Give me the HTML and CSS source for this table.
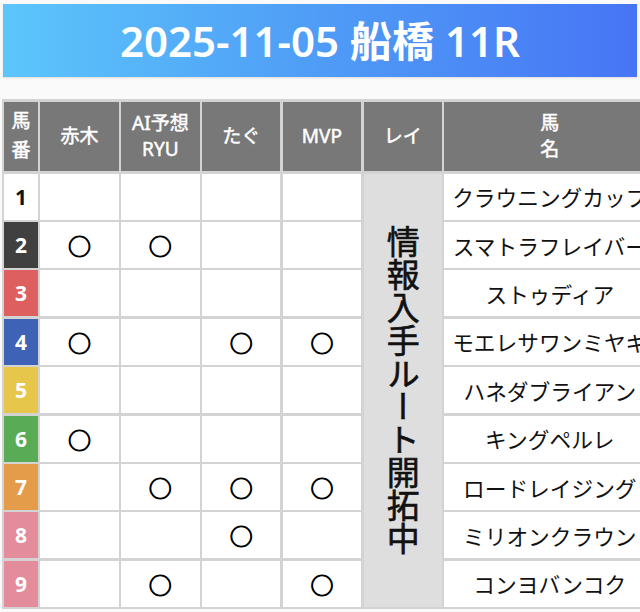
FILE: index.html
```html
<!DOCTYPE html>
<html lang="ja">
<head>
<meta charset="utf-8">
<title>2025-11-05 船橋 11R</title>
<link rel="stylesheet" href="styles.css">
</head>
<body>
<header class="banner"><h1 class="title">2025-11-05 船橋 11R</h1></header>
<div class="grid">
  <div class="hd hd-num"><span>馬</span><span>番</span></div>
  <div class="hd">赤木</div>
  <div class="hd"><span>AI予想</span><span>RYU</span></div>
  <div class="hd">たぐ</div>
  <div class="hd">MVP</div>
  <div class="hd">レイ</div>
  <div class="hd"><span>馬</span><span>名</span></div>

  <div class="num c1">1</div><div class="cell"></div><div class="cell"></div><div class="cell"></div><div class="cell"></div>
  <div class="rei">情報入手ルート開拓中</div>
  <div class="name">クラウニングカップ</div>

  <div class="num c2">2</div><div class="cell">○</div><div class="cell">○</div><div class="cell"></div><div class="cell"></div>
  <div class="name">スマトラフレイバー</div>

  <div class="num c3">3</div><div class="cell"></div><div class="cell"></div><div class="cell"></div><div class="cell"></div>
  <div class="name">ストゥディア</div>

  <div class="num c4">4</div><div class="cell">○</div><div class="cell"></div><div class="cell">○</div><div class="cell">○</div>
  <div class="name">モエレサワンミヤギ</div>

  <div class="num c5">5</div><div class="cell"></div><div class="cell"></div><div class="cell"></div><div class="cell"></div>
  <div class="name">ハネダブライアン</div>

  <div class="num c6">6</div><div class="cell">○</div><div class="cell"></div><div class="cell"></div><div class="cell"></div>
  <div class="name">キングペルレ</div>

  <div class="num c7">7</div><div class="cell"></div><div class="cell">○</div><div class="cell">○</div><div class="cell">○</div>
  <div class="name">ロードレイジング</div>

  <div class="num c8">8</div><div class="cell"></div><div class="cell"></div><div class="cell">○</div><div class="cell"></div>
  <div class="name">ミリオンクラウン</div>

  <div class="num c9">9</div><div class="cell"></div><div class="cell">○</div><div class="cell"></div><div class="cell">○</div>
  <div class="name">コンヨバンコク</div>
</div>
</body>
</html>
```
FILE: styles.css
```css
html, body {
  margin: 0;
  padding: 0;
  overflow: hidden;
  background: #fafafa;
  font-family: "Noto Sans", "Noto Sans CJK JP", sans-serif;
}

.banner {
  margin: 4px 3px 0;
  height: 73px;
  display: flex;
  align-items: center;
  justify-content: center;
  background: linear-gradient(90deg, #5cc6fb 0%, #4f9cf6 50%, #4775f5 100%);
  box-shadow: 0 1px 2px rgba(0, 0, 0, 0.12);
}

.title {
  margin: 0;
  color: #fff;
  font-size: 42px;
  font-weight: 600;
  line-height: 1;
  font-family: "Noto Sans", "Noto Sans CJK JP", sans-serif;
}

.grid {
  margin: 22.3px 0 0 1.6px;
  width: max-content;
  display: grid;
  grid-template-columns: 34px repeat(5, 78.4px) 211px;
  grid-template-rows: 69.6px repeat(9, 46px);
  gap: 2.4px;
  padding: 2.4px;
  background: #d3d3d3;
}

.hd {
  background: #787878;
  color: #fff;
  font-size: 19px;
  font-weight: 400;
  -webkit-text-stroke: 0.5px #fff;
  line-height: 26px;
  display: flex;
  flex-direction: column;
  align-items: center;
  justify-content: center;
  text-align: center;
}

.hd-num {
  line-height: 29px;
}

.num {
  display: flex;
  align-items: center;
  justify-content: center;
  font-size: 21px;
  font-weight: 700;
  color: #fff;
}

.c1 { background: #fff; color: #111; }
.c2 { background: #404040; }
.c3 { background: #dd5f5f; }
.c4 { background: #3e63b6; }
.c5 { background: #e6c74c; }
.c6 { background: #5aab56; }
.c7 { background: #e59c4a; }
.c8 { background: #e38c9c; }
.c9 { background: #e38c9c; }

.cell {
  background: #fff;
  display: flex;
  align-items: center;
  justify-content: center;
  font-size: 23px;
  color: #000;
  -webkit-text-stroke: 1px #000;
  font-family: "Noto Sans CJK JP", sans-serif;
}

.rei {
  grid-column: 6;
  grid-row: 2 / span 9;
  background: #dedede;
  display: flex;
  align-items: center;
  justify-content: center;
  writing-mode: vertical-rl;
  font-family: "Noto Sans CJK JP", sans-serif;
  font-size: 33px;
  color: #111;
  -webkit-text-stroke: 0.6px #111;
  line-height: 1;
}

.name {
  background: #fff;
  display: flex;
  align-items: center;
  justify-content: center;
  white-space: nowrap;
  overflow: hidden;
  font-family: "Noto Sans CJK JP", sans-serif;
  font-size: 21.7px;
  color: #111;
}
```
